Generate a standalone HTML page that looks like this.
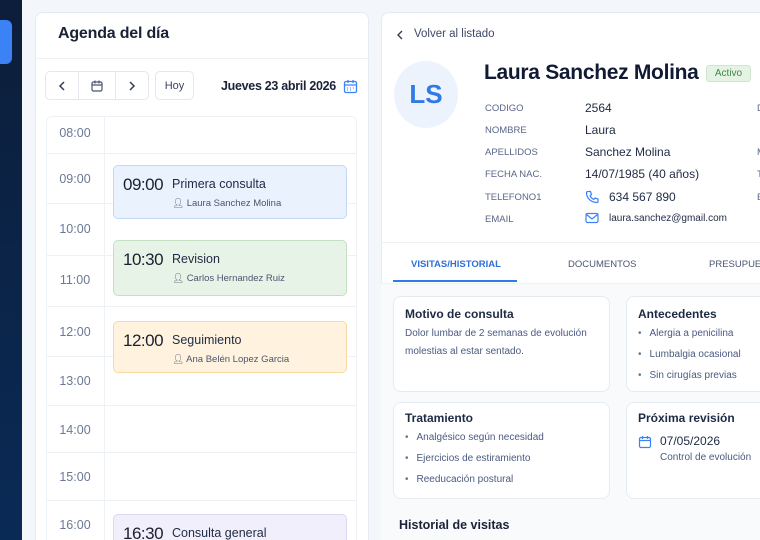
<!DOCTYPE html>
<html style="width:760px;height:540px;overflow:hidden"><head><meta charset="utf-8"><style>
*{box-sizing:border-box;margin:0;padding:0}
body{width:760px;height:540px;overflow:hidden;background:#f3f6fa;font-family:"Liberation Sans",sans-serif;position:relative;color:#1a2540}
.abs{position:absolute}
.side{left:0;top:0;width:22px;height:540px;background:linear-gradient(#0c1e3a,#0a2a56)}
.tab{left:0;top:20px;width:12px;height:44px;background:#3b82f6;border-radius:0 6px 6px 0}
.card{background:#fff;border:1px solid #e6ebf2;border-radius:8px}
.btn{border:1px solid #e3e8ef;background:#fff;height:29px;top:71px;display:flex;align-items:center;justify-content:center;color:#3a4660;font-size:11px}
.time{left:46px;width:58px;text-align:center;font-size:12.5px;color:#6b7896}
.hl{left:47px;width:309px;height:1px;background:#eef1f6}
.ev{left:113px;width:234px;border-radius:5px;border:1px solid}
.ev .t{position:absolute;left:9px;top:9px;font-size:17px;color:#1a2030;letter-spacing:-0.5px}
.ev .n{position:absolute;left:58px;top:11px;font-size:12.5px;color:#1e2a44}
.ev .p{position:absolute;left:58px;top:32px;font-size:9.5px;color:#4a5570}
.lab{font-size:9.5px;color:#5a6688;left:485px}
.val{font-size:12px;color:#1e2a44;left:585px}
.sub{font-size:12px;color:#1e2a44;font-weight:bold}
.txt{font-size:10px;color:#4a5a80;line-height:18px}
ul{list-style:none}
li{font-size:10px;color:#4a5a80;line-height:21px}
li:before{content:"•";margin-right:8px;color:#6a7696}
</style></head><body>
<div class="abs side"></div><div class="abs tab"></div>
<div class="abs card" style="left:35px;top:12px;width:334px;height:540px"></div>
<div class="abs" style="left:35px;top:58px;width:334px;height:1px;background:#eef1f6"></div>
<div class="abs" style="left:58px;top:25px;font-size:16px;font-weight:bold;color:#1a2238;letter-spacing:-0.2px">Agenda del día</div>
<div class="abs btn" style="left:45px;width:34px;border-radius:5px 0 0 5px">
<svg width="10" height="12"><path d="M7 2L3 6l4 4" fill="none" stroke="#333d55" stroke-width="1.5"/></svg></div>
<div class="abs btn" style="left:78px;width:38px"><svg width="14" height="14"><rect x="2" y="3" width="10" height="9" rx="1.5" fill="none" stroke="#4a5570" stroke-width="1.2"/><path d="M2 6h10M5 1.5v3M9 1.5v3" stroke="#4a5570" stroke-width="1.2"/></svg></div>
<div class="abs btn" style="left:115px;width:34px;border-radius:0 5px 5px 0"><svg width="10" height="12"><path d="M3 2l4 4-4 4" fill="none" stroke="#333d55" stroke-width="1.5"/></svg></div>
<div class="abs btn" style="left:155px;width:39px;border-radius:5px">Hoy</div>
<div class="abs" style="left:221px;top:79px;font-size:12.5px;font-weight:bold;color:#1a2238;letter-spacing:-0.3px">Jueves 23 abril 2026</div>
<svg class="abs" style="left:343px;top:79px" width="15" height="15"><rect x="1.5" y="2.5" width="12" height="11" rx="1.5" fill="none" stroke="#3b82f6" stroke-width="1.3"/><path d="M1.5 6h12M5 1v3M10 1v3" stroke="#3b82f6" stroke-width="1.3"/><path d="M4 9h1M7 9h1M10 9h1M4 11h1M7 11h1" stroke="#3b82f6"/></svg>
<div class="abs" style="left:46px;top:116px;width:311px;height:430px;border:1px solid #eef1f6;border-radius:6px"></div>
<div class="abs" style="left:104px;top:116px;width:1px;height:430px;background:#eef1f6"></div>
<div class="abs hl" style="top:153px"></div><div class="abs hl" style="top:203px"></div><div class="abs hl" style="top:255px"></div><div class="abs hl" style="top:306px"></div><div class="abs hl" style="top:356px"></div><div class="abs hl" style="top:405px"></div><div class="abs hl" style="top:452px"></div><div class="abs hl" style="top:500px"></div>
<div class="abs time" style="top:126px">08:00</div>
<div class="abs time" style="top:172px">09:00</div>
<div class="abs time" style="top:222px">10:00</div>
<div class="abs time" style="top:273px">11:00</div>
<div class="abs time" style="top:325px">12:00</div>
<div class="abs time" style="top:374px">13:00</div>
<div class="abs time" style="top:423px">14:00</div>
<div class="abs time" style="top:470px">15:00</div>
<div class="abs time" style="top:518px">16:00</div>
<div class="abs ev" style="top:165px;height:54px;background:#eaf2fd;border-color:#c2d8f5"><div class="t">09:00</div><div class="n">Primera consulta</div><div class="p">👤︎ Laura Sanchez Molina</div></div>
<div class="abs ev" style="top:240px;height:56px;background:#e7f3e6;border-color:#c4e0c3"><div class="t">10:30</div><div class="n">Revision</div><div class="p">👤︎ Carlos Hernandez Ruiz</div></div>
<div class="abs ev" style="top:321px;height:52px;background:#fff3df;border-color:#f8d9a0"><div class="t">12:00</div><div class="n">Seguimiento</div><div class="p">👤︎ Ana Belén Lopez Garcia</div></div>
<div class="abs ev" style="top:514px;height:40px;background:#f1effc;border-color:#dcd6f3"><div class="t">16:30</div><div class="n">Consulta general</div></div>

<div class="abs card" style="left:381px;top:12px;width:400px;height:540px"></div>
<div class="abs" style="left:381px;top:242px;width:380px;height:1px;background:#eef1f6"></div>
<div class="abs" style="left:381px;top:283px;width:380px;height:260px;background:#f9fafc"></div>
<div class="abs" style="left:381px;top:283px;width:380px;height:1px;background:#eef1f6"></div>
<svg class="abs" style="left:395px;top:29px" width="10" height="12"><path d="M7 2L3 6l4 4" fill="none" stroke="#333d55" stroke-width="1.4"/></svg>
<div class="abs" style="left:414px;top:28px;font-size:11.5px;color:#3f4a66">Volver al listado</div>
<div class="abs" style="left:394px;top:61px;width:64px;height:67px;border-radius:50%;background:#ecf3fd;color:#2f7ae5;font-size:26px;font-weight:bold;display:flex;align-items:center;justify-content:center">LS</div>
<div class="abs" style="left:484px;top:61px;font-size:21px;font-weight:bold;color:#111a33;letter-spacing:-0.3px">Laura Sanchez Molina</div>
<div class="abs" style="left:706px;top:65px;width:45px;height:17px;border-radius:3px;background:#e5f3e4;border:1px solid #cfe6cf;color:#3d8a45;font-size:10px;text-align:center;line-height:15px">Activo</div>
<div class="abs lab" style="top:103px">CODIGO</div><div class="abs val" style="top:101px">2564</div>
<div class="abs lab" style="top:125px">NOMBRE</div><div class="abs val" style="top:123px">Laura</div>
<div class="abs lab" style="top:147px">APELLIDOS</div><div class="abs val" style="top:145px">Sanchez Molina</div>
<div class="abs lab" style="top:169px">FECHA NAC.</div><div class="abs val" style="top:167px">14/07/1985 (40 años)</div>
<div class="abs lab" style="top:192px">TELEFONO1</div><div class="abs val" style="top:190px;left:609px">634 567 890</div>
<div class="abs lab" style="top:214px">EMAIL</div><div class="abs val" style="top:213px;left:609px;font-size:10px">laura.sanchez@gmail.com</div>
<svg class="abs" style="left:585px;top:190px" width="14" height="14"><path d="M3 1.5l2.5 0 1 3-1.5 1.3c.8 1.7 2 2.9 3.7 3.7l1.3-1.5 3 1v2.5c0 .8-.6 1-1.3 1C6 12.5 1.5 8 1.5 2.8c0-.7.6-1.3 1.5-1.3z" fill="none" stroke="#3b82f6" stroke-width="1.2"/></svg>
<svg class="abs" style="left:585px;top:212px" width="14" height="12"><rect x="1" y="1.5" width="12" height="9" rx="1.5" fill="none" stroke="#3b82f6" stroke-width="1.2"/><path d="M1.5 2.5L7 7l5.5-4.5" fill="none" stroke="#3b82f6" stroke-width="1.2"/></svg>
<div class="abs" style="left:757px;top:103px;font-size:9.5px;color:#5a6688">D</div>
<div class="abs" style="left:757px;top:147px;font-size:9.5px;color:#5a6688">M</div>
<div class="abs" style="left:757px;top:169px;font-size:9.5px;color:#5a6688">T</div>
<div class="abs" style="left:757px;top:192px;font-size:9.5px;color:#5a6688">E</div>
<div class="abs" style="left:411px;top:259px;font-size:9.5px;font-weight:bold;color:#2f6fd6">VISITAS/HISTORIAL</div>
<div class="abs" style="left:393px;top:280px;width:124px;height:2px;background:#2f7ae5"></div>
<div class="abs" style="left:568px;top:259px;font-size:9.5px;color:#4a5570">DOCUMENTOS</div>
<div class="abs" style="left:709px;top:259px;font-size:9.5px;color:#4a5570">PRESUPUESTOS</div>
<div class="abs card" style="left:393px;top:296px;width:217px;height:96px;padding:10px 11px"><div class="sub">Motivo de consulta</div><div class="txt" style="margin-top:4px">Dolor lumbar de 2 semanas de evolución molestias al estar sentado.</div></div>
<div class="abs card" style="left:626px;top:296px;width:160px;height:96px;padding:10px 11px"><div class="sub">Antecedentes</div><ul style="margin-top:2px"><li>Alergia a penicilina</li><li>Lumbalgia ocasional</li><li>Sin cirugías previas</li></ul></div>
<div class="abs card" style="left:393px;top:402px;width:217px;height:97px;padding:8px 11px"><div class="sub">Tratamiento</div><ul style="margin-top:2px"><li>Analgésico según necesidad</li><li>Ejercicios de estiramiento</li><li>Reeducación postural</li></ul></div>
<div class="abs card" style="left:626px;top:402px;width:160px;height:97px;padding:8px 11px"><div class="sub">Próxima revisión</div>
<div style="margin-top:9px;font-size:12px;color:#1e2a44;padding-left:22px">07/05/2026</div><div style="margin-top:4px;font-size:10px;color:#4a5a80;padding-left:22px">Control de evolución</div></div>
<svg class="abs" style="left:638px;top:435px" width="14" height="14"><rect x="1.5" y="2.5" width="11" height="10" rx="1.5" fill="none" stroke="#3b82f6" stroke-width="1.2"/><path d="M1.5 5.5h11M4.5 1v3M9.5 1v3" stroke="#3b82f6" stroke-width="1.2"/></svg>
<div class="abs" style="left:399px;top:518px;font-size:12.5px;font-weight:bold;color:#1a2238">Historial de visitas</div>
</body></html>
